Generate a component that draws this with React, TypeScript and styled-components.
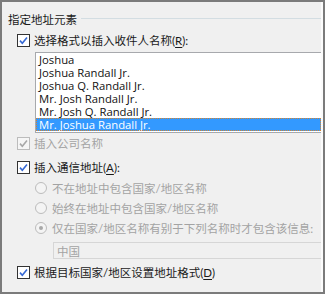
import React from "react";
import styled, { createGlobalStyle } from "styled-components";

const Global = createGlobalStyle`
  html, body { margin: 0; padding: 0; background: #ffffff; }
  * { box-sizing: border-box; }
`;

const Frame = styled.div`
  width: 325px;
  height: 294px;
  border: 2px solid #7b7b7b;
  background: #f0f0f0;
  overflow: hidden;
  font-family: Lato, "Noto Sans CJK SC", sans-serif;
  font-size: 11.5px;
  color: #1a1a1a;
`;

const Group = styled.div`
  height: 100%;
  border-right: 2px solid #fbfbfb;
  display: flex;
  flex-direction: column;
  padding-left: 15px;
`;

const TitleRow = styled.div`
  display: flex;
  height: 16px;
  margin-top: 10px;
  margin-left: -9px;
  align-items: center;
`;

const Title = styled.span`
  line-height: 16px;
  white-space: nowrap;
`;

const TitleLine = styled.div`
  flex: 1;
  height: 1px;
  background: #d3dde2;
  align-self: flex-start;
  margin-top: 6px;
  margin-left: 4px;
`;

const Row = styled.div<{ $top: number; $indent?: number; $disabled?: boolean }>`
  display: flex;
  align-items: center;
  height: 16px;
  margin-top: ${(p) => p.$top}px;
  margin-left: ${(p) => p.$indent ?? 0}px;
  color: ${(p) => (p.$disabled ? "#a3a3a3" : "#1a1a1a")};
  white-space: nowrap;
`;

const Box = styled.span<{ $disabled?: boolean }>`
  width: 13px;
  height: 13px;
  flex: none;
  border: 1px solid ${(p) => (p.$disabled ? "#bcbcbc" : "#333333")};
  background: ${(p) => (p.$disabled ? "#f6f6f6" : "#ffffff")};
  display: flex;
  align-items: center;
  justify-content: center;
  margin-right: 4px;
`;

const Radio = styled.span<{ $checked?: boolean }>`
  width: 12px;
  height: 12px;
  flex: none;
  border-radius: 50%;
  border: 1px solid #bcbcbc;
  background: #f4f4f4;
  display: flex;
  align-items: center;
  justify-content: center;
  margin-right: 5px;
  &::after {
    content: "";
    display: ${(p) => (p.$checked ? "block" : "none")};
    width: 4px;
    height: 4px;
    border-radius: 50%;
    background: #a8a8a8;
  }
`;

const Key = styled.span`
  text-decoration: underline;
  text-underline-offset: 2px;
`;

const ListBox = styled.div`
  margin-top: 4px;
  margin-left: 18px;
  height: 81px;
  border: 1px solid #a7a9ad;
  border-right: none;
  background: #ffffff;
  padding: 0 0 1px 0;
  display: flex;
  flex-direction: column;
  font-family: "Open Sans", sans-serif;
  font-size: 11.3px;
`;

const Item = styled.div<{ $selected?: boolean }>`
  height: 13px;
  line-height: 13px;
  padding-left: 3px;
  white-space: nowrap;
  color: ${(p) => (p.$selected ? "#ffffff" : "#111111")};
  background: ${(p) => (p.$selected ? "#3399ff" : "transparent")};
  outline: ${(p) => (p.$selected ? "1px dotted #d4832e" : "none")};
  outline-offset: -1px;
`;

const TextBox = styled.div`
  margin-top: 6px;
  margin-left: 36px;
  height: 17px;
  border: 1px solid #d6d6d6;
  border-right: none;
  background: #f0f0f0;
  color: #a3a3a3;
  padding-left: 3px;
  display: flex;
  align-items: center;
`;

function Check({ disabled }: { disabled?: boolean }) {
  return (
    <Box $disabled={disabled}>
      <svg width="11" height="11" viewBox="0 0 11 11">
        <path
          d="M2 5.6 L4.3 8.2 L9 2.4"
          fill="none"
          stroke={disabled ? "#a8a8a8" : "#3568d4"}
          strokeWidth="1.6"
        />
      </svg>
    </Box>
  );
}

const names = [
  "Joshua",
  "Joshua Randall Jr.",
  "Joshua Q. Randall Jr.",
  "Mr. Josh Randall Jr.",
  "Mr. Josh Q. Randall Jr.",
  "Mr. Joshua Randall Jr.",
];

export default function App() {
  return (
    <>
      <Global />
      <Frame>
        <Group>
          <TitleRow>
            <Title>指定地址元素</Title>
            <TitleLine />
          </TitleRow>
          <Row $top={4}>
            <Check />
            <span>
              选择格式以插入收件人名称(<Key>R</Key>):
            </span>
          </Row>
          <ListBox>
            {names.map((n, i) => (
              <Item key={n} $selected={i === names.length - 1}>
                {n}
              </Item>
            ))}
          </ListBox>
          <Row $top={2} $disabled>
            <Check disabled />
            <span>插入公司名称</span>
          </Row>
          <Row $top={8}>
            <Check />
            <span>
              插入通信地址(<Key>A</Key>):
            </span>
          </Row>
          <Row $top={5} $indent={18} $disabled>
            <Radio />
            <span>不在地址中包含国家/地区名称</span>
          </Row>
          <Row $top={4} $indent={18} $disabled>
            <Radio />
            <span>始终在地址中包含国家/地区名称</span>
          </Row>
          <Row $top={4} $indent={18} $disabled>
            <Radio $checked />
            <span>仅在国家/地区名称有别于下列名称时才包含该信息:</span>
          </Row>
          <TextBox>中国</TextBox>
          <Row $top={5}>
            <Check />
            <span>
              根据目标国家/地区设置地址格式(<Key>D</Key>)
            </span>
          </Row>
        </Group>
      </Frame>
    </>
  );
}
